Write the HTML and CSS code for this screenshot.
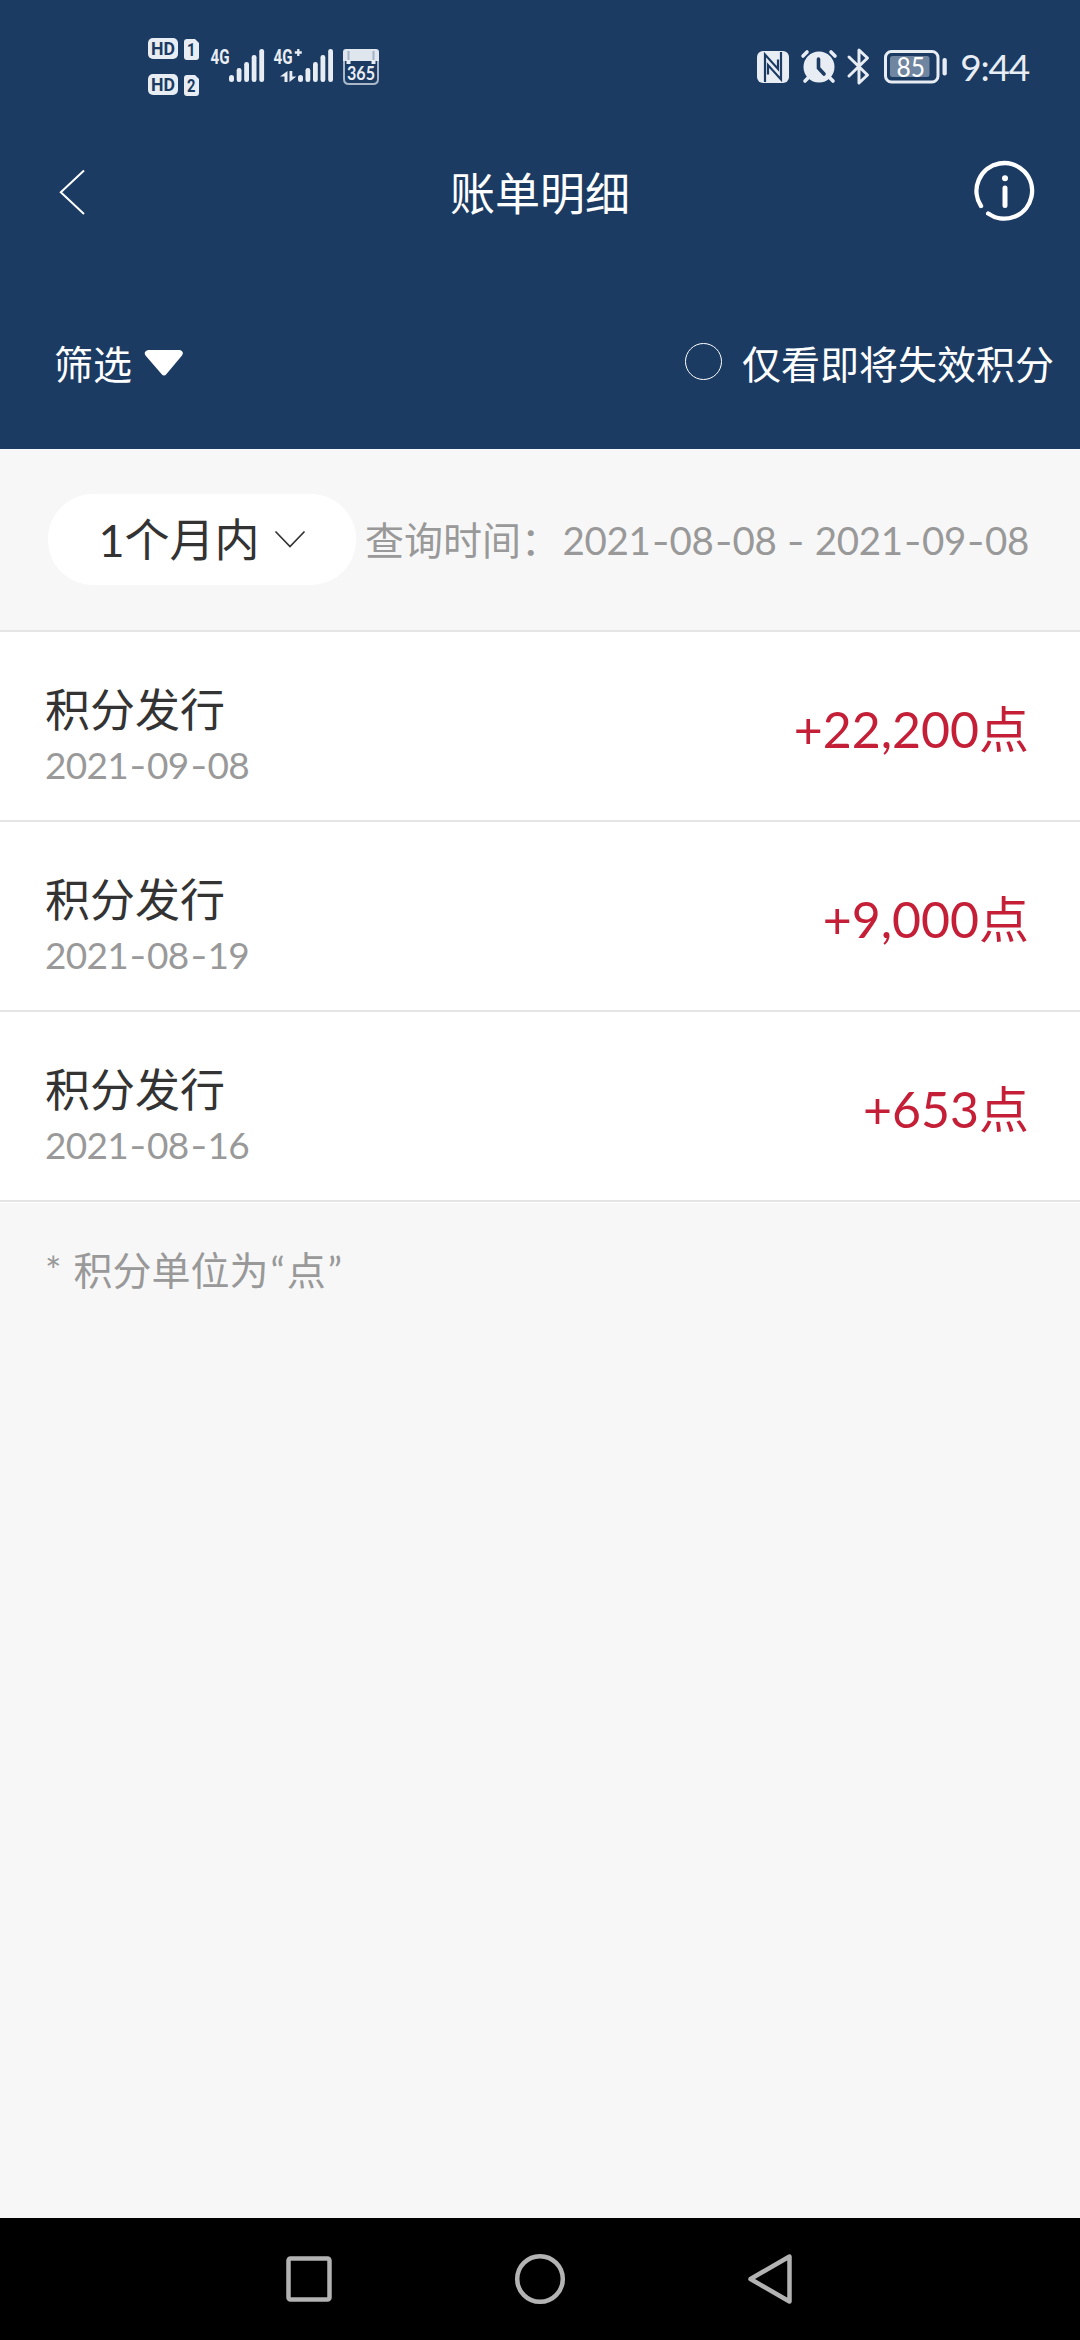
FILE: index.html
```html
<!DOCTYPE html>
<html lang="zh-CN">
<head>
<meta charset="utf-8">
<title>账单明细</title>
<link rel="stylesheet" href="styles.css">
</head>
<body>
<div class="screen">
  <header class="header">
    <div class="status">
      <div class="status-left">
        <svg class="hd" width="51" height="64" viewBox="148 35 51 64">
          <g fill="#e8edf4"><rect x="148" y="38" width="30" height="21" rx="5"/><rect x="148" y="74" width="30" height="21" rx="5"/>
          <path d="M187 39h8l4 4v14q0 3-3 3h-9q-3 0-3-3V42q0-3 3-3zM187 75h8l4 4v14q0 3-3 3h-9q-3 0-3-3V78q0-3 3-3z"/></g>
          <g class="hd-text" fill="#1b3b63"><text x="151" y="55.3" textLength="24" lengthAdjust="spacingAndGlyphs">HD</text><text x="151" y="91.3" textLength="24" lengthAdjust="spacingAndGlyphs">HD</text><text x="187" y="56.3" textLength="8.5" lengthAdjust="spacingAndGlyphs">1</text><text x="187" y="92.3" textLength="8.5" lengthAdjust="spacingAndGlyphs">2</text></g>
        </svg>
        <svg class="signal" width="54" height="36" viewBox="211 47 54 36">
          <text class="net" x="210.500" y="64" textLength="19" lengthAdjust="spacingAndGlyphs">4G</text>
          <g fill="#e8edf4"><rect x="229" y="75" width="5" height="7" rx="2.500"/><rect x="236.700" y="68" width="4.800" height="14" rx="2.300"/><rect x="244.200" y="62" width="4.800" height="20" rx="2.300"/><rect x="251.700" y="55" width="4.800" height="27" rx="2.300"/><rect x="259.300" y="49" width="4.800" height="33" rx="2.300"/></g>
        </svg>
        <svg class="signal-data" width="60" height="36" viewBox="274 47 60 36">
          <text class="net" x="273.500" y="64" textLength="19" lengthAdjust="spacingAndGlyphs">4G</text>
          <path d="M298.300 49v7M294.800 52.500h7" fill="none" stroke="#e8edf4" stroke-width="2.300"/>
          <path d="M287.500 71v11h-3v-5.500h-4.500zM289.500 82V71h2.800v5.500h4z" fill="#e8edf4"/>
          <g fill="#e8edf4"><rect x="298" y="75" width="5" height="7" rx="2.500"/><rect x="305.500" y="68" width="4.800" height="14" rx="2.300"/><rect x="313" y="62" width="4.800" height="20" rx="2.300"/><rect x="320.500" y="55" width="4.800" height="27" rx="2.300"/><rect x="328.200" y="49" width="4.800" height="33" rx="2.300"/></g>
        </svg>
        <svg class="calendar" width="36" height="36" viewBox="0 0 36 36">
          <path d="M3 0h30q3 0 3 3v9H0V3q0-3 3-3z" fill="#e0e6ed"/>
          <path d="M1 12v18q0 5 5 5h24q5 0 5-5V12" fill="none" stroke="#a9b7c8" stroke-width="2"/>
          <path d="M5.500 2v12M30.500 2v12" stroke="#a3b2c4" stroke-width="2"/><path d="M5.500 11v4M30.500 11v4" stroke="#e8edf4" stroke-width="4"/>
          <text class="cal-text" x="4" y="30.500" textLength="28" lengthAdjust="spacingAndGlyphs">365</text>
        </svg>
      </div>
      <div class="status-right">
        <svg width="32" height="32" viewBox="0 0 32 32">
          <rect width="32" height="32" rx="6" fill="#e8edf4"/>
          <path d="M8 31V3.500L21 18V8.500M24 1v27.500L11 14v9.500" fill="none" stroke="#1b3b63" stroke-width="2.200"/>
        </svg>
        <svg class="alarm" width="36" height="33" viewBox="0 0 36 33">
          <g fill="none" stroke="#e8edf4" stroke-width="3.600" stroke-linecap="round"><path d="M2 6l4-4M34 6l-4-4M7 28l-3 3M29 28l3 3"/></g>
          <circle cx="18" cy="17" r="15.500" fill="#e8edf4"/><path d="M17.500 9v9l5.500 6" fill="none" stroke="#1b3b63" stroke-width="3.600" stroke-linecap="round"/>
        </svg>
        <svg class="bt" width="23" height="37" viewBox="0 0 23 37">
          <path d="M2 9l18.500 18L12 35V2l8.500 8L2 28" fill="none" stroke="#e8edf4" stroke-width="3" stroke-linecap="round" stroke-linejoin="round"/>
        </svg>
        <svg class="battery" width="63" height="34" viewBox="0 0 63 34">
          <rect x="1.500" y="1.500" width="52.500" height="30.500" rx="6" fill="none" stroke="#e8edf4" stroke-width="3"/>
          <rect x="6" y="6" width="39.500" height="21" rx="2.500" fill="#7085a0"/><rect x="58.500" y="8" width="4.300" height="17.500" rx="2" fill="#e8edf4"/>
          <text class="bat-text" x="12.500" y="26.500" textLength="28.500" lengthAdjust="spacingAndGlyphs">85</text>
        </svg>
        <span class="clock">9:44</span>
      </div>
    </div>
    <div class="titlebar">
      <svg width="28" height="48" viewBox="0 0 28 48"><path d="M25 2.500L1.800 24.300 25 46" fill="none" stroke="#fff" stroke-width="2"/></svg>
      <h1 class="title">账单明细</h1>
      <svg width="60" height="60" viewBox="0 0 60 60" fill="none" stroke="#fff" stroke-linecap="round">
        <path d="M13.200 51.500A27.800 27.800 0 1 0 6 44" stroke-width="4.400"/><path d="M30 26v17.500" stroke-width="5"/><circle cx="30" cy="16.300" r="3" fill="#fff" stroke="none"/>
      </svg>
    </div>
    <div class="filters">
      <div class="filter">筛选<svg class="caret" width="40" height="26" viewBox="0 0 40 26"><path d="M4 0h32q4.500 1.500 2 5.500L22.500 24q-2.500 3-5 0L1.500 5.500Q-1 1.500 4 0z" fill="#fff"/></svg></div>
      <div class="expiring"><span class="radio"></span>仅看即将失效积分</div>
    </div>
  </header>
  <section class="range">
    <div class="pill"><span class="period">1个月内</span><svg width="32" height="20" viewBox="0 0 32 20"><path d="M1.500 1.500L16 16.500 30.500 1.500" fill="none" stroke="#333" stroke-width="1.700"/></svg></div>
    <div class="query">查询时间：</div>
    <div class="dates">2021<i>-</i>08<i>-</i>08 <i>-</i> 2021<i>-</i>09<i>-</i>08</div>
  </section>
  <main class="list">
    <article class="row"><div class="entry"><div class="name">积分发行</div><div class="date">2021<i>-</i>09<i>-</i>08</div></div><div class="amount">+22,200点</div></article>
    <article class="row"><div class="entry"><div class="name">积分发行</div><div class="date">2021<i>-</i>08<i>-</i>19</div></div><div class="amount">+9,000点</div></article>
    <article class="row"><div class="entry"><div class="name">积分发行</div><div class="date">2021<i>-</i>08<i>-</i>16</div></div><div class="amount">+653点</div></article>
  </main>
  <p class="note">* 积分单位为<span class="quote">“</span>点<span class="quote">”</span></p>
  <nav class="nav">
    <svg width="52" height="52" viewBox="0 0 52 52"><rect x="5.500" y="5.500" width="41" height="41" rx="2" /></svg>
    <svg width="52" height="52" viewBox="0 0 52 52"><circle cx="26" cy="26" r="22.800"/></svg>
    <svg width="52" height="52" viewBox="0 0 52 52"><path d="M44.500 3.500v45L5.500 26z" stroke-linejoin="round"/></svg>
  </nav>
</div>
</body>
</html>
```
FILE: styles.css
```css
* { box-sizing: border-box; }
body { margin: 0; font-family: Lato, "Noto Sans CJK SC", sans-serif; color: #333; }
svg { display: block; flex: none; overflow: visible; }
i { display: inline-block; font-style: normal; width: 19px; text-align: center; transform: scaleX(1.25); }

.screen { width: 1080px; height: 2340px; display: flex; flex-direction: column; background: #f7f7f7; overflow: hidden; }

.header { height: 449px; background: #1b3b63; color: #fff; }
.status { height: 133px; padding: 0 51px 0 148px; display: flex; justify-content: space-between; align-items: center; }
.status-left, .status-right { display: flex; align-items: center; }
.signal { margin-left: 12px; }
.signal-data { margin-left: 9px; }
.calendar { margin-left: 9px; }
.signal, .signal-data { margin-top: -4px; }
.hd-text { font: 700 18px Roboto, sans-serif; }
.net { font: 700 20px Roboto, sans-serif; fill: #e8edf4; }
.cal-text { font: 700 18px Lato, sans-serif; fill: #e8edf4; }
.bat-text { font: 400 27px Lato, sans-serif; fill: #fff; }
.alarm { margin-left: 12px; }
.bt { margin-left: 10px; }
.battery { margin-left: 14px; }
.clock { margin-left: 13px; font-size: 37px; line-height: 40px; letter-spacing: -1.200px; color: #e8edf4; }

.titlebar { height: 117px; padding: 0 45px 0 59px; display: grid; grid-template-columns: 58px 1fr 60px; align-items: center; }
.title { margin: 5px 0 0 -12px; text-align: center; font-size: 45px; font-weight: 400; line-height: 60px; }

.filters { height: 199px; padding: 29px 26px 0 54px; display: flex; justify-content: space-between; align-items: center; font-size: 39px; line-height: 56px; }
.filter { display: flex; align-items: center; gap: 12px; }
.caret { margin-bottom: 3px; }
.expiring { display: flex; align-items: center; gap: 20px; }
.radio { width: 37px; height: 37px; margin-bottom: 5px; border: 1.500px solid #fff; border-radius: 50%; }

.range { height: 183px; padding: 0 51px 0 48px; display: flex; align-items: center; border-bottom: 2px solid #e5e5e5; color: #999; font-size: 39px; line-height: 56px; white-space: nowrap; }
.pill { flex: none; width: 308px; height: 91px; border-radius: 45px; background: #fff; color: #333; display: flex; align-items: center; justify-content: center; gap: 14px; font-size: 45px; }
.query { flex: none; margin-left: 9px; width: 195px; }
.dates { flex: 1; text-align: right; font-size: 38.500px; letter-spacing: -0.300px; }

.list { background: #fff; padding-bottom: 1px; }
.row { height: 190px; padding: 0 51px 0 45px; border-bottom: 2px solid #e5e5e5; display: flex; justify-content: space-between; align-items: center; }
.entry { padding-top: 17px; }
.name { font-size: 45px; line-height: 60px; }
.date { font-size: 37px; line-height: 50px; letter-spacing: -0.700px; color: #999; }
.amount { padding-top: 6px; font-size: 50px; line-height: 60px; color: #c41f37; }

.note { margin: 0; padding: 37px 45px; font-size: 39px; line-height: 60px; word-spacing: 2px; color: #999; }
.quote { padding: 0 2px; }

.nav { margin-top: auto; height: 122px; background: #000; display: flex; justify-content: center; align-items: center; gap: 179px; }
.nav svg { fill: none; stroke: #b3b3b3; stroke-width: 4.500px; }
```
